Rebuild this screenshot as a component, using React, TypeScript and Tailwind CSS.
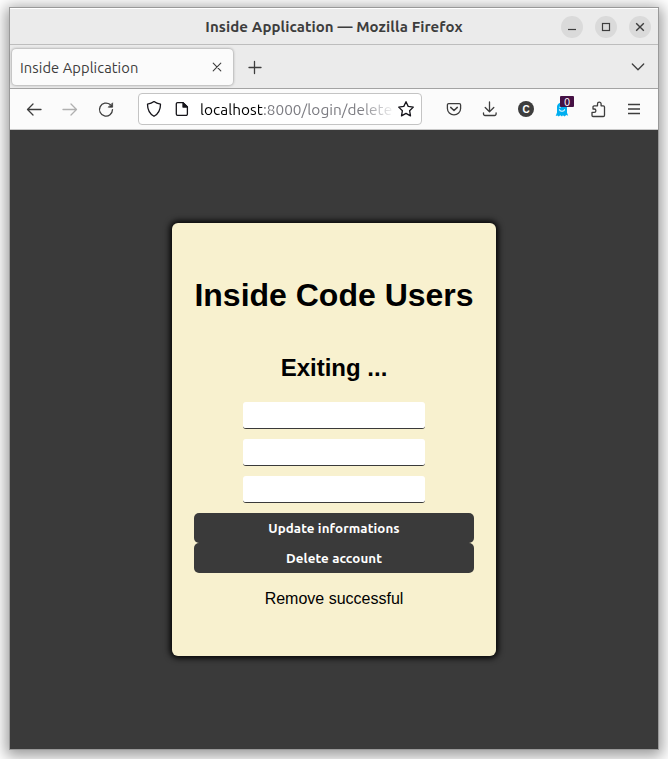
import React from "react";

const ui = "font-['Ubuntu','Noto_Sans',sans-serif]";

function Icon({ className = "", children }: { className?: string; children: React.ReactNode }) {
  return (
    <svg
      width="18"
      height="18"
      viewBox="0 0 18 18"
      fill="none"
      stroke="currentColor"
      strokeWidth="1.3"
      strokeLinecap="round"
      strokeLinejoin="round"
      className={`shrink-0 ${className}`}
    >
      {children}
    </svg>
  );
}

function WindowButton({ children }: { children: React.ReactNode }) {
  return (
    <div className="flex size-[22px] items-center justify-center rounded-full bg-[#dadada]">
      <svg width="22" height="22" viewBox="0 0 22 22" fill="none" stroke="#3d3d3d" strokeWidth="1.2">
        {children}
      </svg>
    </div>
  );
}

function TitleBar() {
  return (
    <div className="grid h-[37px] grid-cols-[100px_1fr_100px] items-center border-t border-b border-t-white border-b-[#bdbdbd] bg-[#ebebeb]">
      <div />
      <div className={`${ui} pt-[2px] text-center text-[15px] font-bold tracking-[0.1px] whitespace-nowrap text-[#3d3d3d]`}>
        Inside Application — Mozilla Firefox
      </div>
      <div className="flex justify-end gap-3 pr-[7px]">
        <WindowButton>
          <path d="M7 13.5h8" />
        </WindowButton>
        <WindowButton>
          <rect x="7.5" y="7.5" width="7" height="7" />
        </WindowButton>
        <WindowButton>
          <path d="M7.2 7.2l7.6 7.6M14.8 7.2l-7.6 7.6" strokeWidth="1.4" />
        </WindowButton>
      </div>
    </div>
  );
}

function TabStrip() {
  return (
    <div className="flex h-11 items-center border-b border-[#a3a3a3] bg-[#ebebeb] pl-[2px] text-[#3d3d3d]">
      <div className="flex h-9 w-[221px] items-center justify-between rounded bg-[#fbfbfb] pr-[7px] pl-2 shadow-[0_0_3px_rgba(0,0,0,0.45)]">
        <span className={`${ui} pt-[3px] text-[14.7px] tracking-[0.08px]`}>Inside Application</span>
        <Icon>
          <path d="M5.2 5.2l7.6 7.6M12.8 5.2l-7.6 7.6" strokeWidth="1.1" />
        </Icon>
      </div>
      <Icon className="ml-[13px]">
        <path d="M3 9.5h12M8.500 3.500v12" />
      </Icon>
      <Icon className="mr-[11px] ml-auto">
        <path d="M3.3 6l5.7 5.7L14.7 6" />
      </Icon>
    </div>
  );
}

function AddressBar() {
  return (
    <div className="ml-[23px] flex h-8 w-[284px] items-center rounded border border-[#c4c4c4] bg-white pl-1.5 text-[#15141a]">
      <Icon>
        <path d="M9 1.6c1.8 1.5 4 2.3 6.5 2.6 0 6.2-2 9.500-6.500 12.100-4.500-2.600-6.500-5.900-6.500-12.100C5 3.900 7.200 3.100 9 1.600z" />
      </Icon>
      <Icon className="ml-[10px]">
        <path d="M4.600 2.600h5.400l4.400 4.400v7.100a1.300 1.300 0 0 1-1.300 1.300H4.600a1.300 1.300 0 0 1-1.300-1.300V3.900a1.300 1.300 0 0 1 1.300-1.300z" />
        <path d="M10 2.600V7h4.400z" fill="currentColor" />
      </Icon>
      <div
        className={`${ui} ml-[9px] w-[192px] overflow-hidden pt-[2px] text-[15.400px] tracking-[0.03px] whitespace-nowrap text-black [mask-image:linear-gradient(to_right,black_160px,transparent_196px)]`}
      >
        localhost<span className="text-[#7c7c82]">:8000/login/delete</span>
      </div>
      <Icon className="ml-[5px]">
        <path d="M9 1.700l2.200 4.700 5.100.7-3.700 3.600.9 5.200L9 13.400l-4.500 2.500.9-5.200-3.700-3.600 5.100-.7z" />
      </Icon>
    </div>
  );
}

function Ghost() {
  return (
    <div className="relative size-[18px]">
      <svg width="18" height="18" viewBox="0 0 18 18">
        <path
          d="M4 7.500C4 4 6.200 2.500 9 2.500s5 1.500 5 5v5.300l1.200 3-1.900-.8-1.800 1.500-1.600-1.200L9 16.500l-1.700-1.300-1.600 1.300-1.300-1-1.700.4L4 12.500z"
          fill="#00aef0"
        />
        <path d="M6.300 9.300c.6 2.600 4.800 2.600 5.400 0" fill="none" stroke="#fff" strokeWidth="1.100" />
        <circle cx="7" cy="7.300" r=".7" fill="#fff" />
      </svg>
      <span
        className={`${ui} absolute top-[-4px] left-[7px] flex h-[11px] w-[14px] items-center justify-center rounded-[1px] bg-[#451144] pt-px text-[11px] leading-none text-white`}
      >
        0
      </span>
    </div>
  );
}

function Toolbar() {
  return (
    <div className="flex h-[41px] items-center border-b border-[#c8c8c8] bg-[#fbfbfb] pl-[15px] text-[#3d3d3d]">
      <Icon>
        <path d="M16 9.500H2.500M8 4L2.500 9.500 8 15" />
      </Icon>
      <Icon className="ml-[18px] text-[#b0b0b0]">
        <path d="M2 9.500h13.500M10 4l5.500 5.500L10 15" />
      </Icon>
      <Icon className="ml-[18px]">
        <path d="M15.500 9.600a6.500 6.500 0 1 1-2.300-5" />
        <path d="M15.600 3.200v4h-4z" fill="currentColor" strokeWidth=".8" />
      </Icon>
      <AddressBar />
      <div className="ml-[23px] flex items-center gap-[18px]">
        <Icon>
          <path d="M3.700 3.600h10.600a1.300 1.300 0 0 1 1.300 1.300v3.600a6.600 6.300 0 0 1-13.200 0V4.900a1.300 1.300 0 0 1 1.300-1.300z" />
          <path d="M5.700 7.400L9 10.500l3.300-3.100" strokeWidth="1.500" />
        </Icon>
        <Icon>
          <path d="M8.500 2v9.500M4.200 7.500L8.500 11.700l4.300-4.200M2.500 12.800v1.200a1.500 1.500 0 0 0 1.500 1.500h9.600a1.500 1.500 0 0 0 1.500-1.500v-1.200" />
        </Icon>
        <div className="flex size-[18px] items-center justify-center">
          <span className="flex size-4 items-center justify-center rounded-full bg-[#3d3d3d] pt-px font-['Liberation_Sans',sans-serif] text-[10px] leading-none font-bold text-white">
            C
          </span>
        </div>
        <Ghost />
        <Icon>
          <path d="M4 16.500h10.300a1.200 1.200 0 0 0 1.200-1.200V7a1.200 1.200 0 0 0-1.200-1.200h-2.200V4a1.800 1.800 0 0 0-3.600 0v1.800H5.200A1.200 1.200 0 0 0 4 7v2h1.200a1.700 1.700 0 0 1 0 3.400H3v3.100a1 1 0 0 0 1 1z" />
        </Icon>
        <Icon>
          <path d="M3 4.500h12M3 9h12M3 13.500h12" strokeLinecap="butt" strokeWidth="1.350" />
        </Icon>
      </div>
    </div>
  );
}

function Field() {
  return (
    <input className="h-[27px] w-[182px] rounded-[3px] border-b border-[#3a3a3a] bg-white px-2 outline-none" />
  );
}

function ActionButton({ children }: { children: React.ReactNode }) {
  return (
    <button
      className={`${ui} h-[30px] w-full rounded-[5px] bg-[#3a3a3a] pt-px text-[13.333px] font-bold tracking-[0.1px] text-white`}
    >
      {children}
    </button>
  );
}

function LoginCard() {
  return (
    <div className="flex h-[433px] w-[324px] flex-col items-center rounded-md bg-[#f8f1cf] px-[22px] pt-[54px] font-['Liberation_Sans',Arial,sans-serif] text-black shadow-[0_0_6px_2px_#000]">
      <h1 className="text-[32px] leading-[37px] font-bold whitespace-nowrap">Inside Code Users</h1>
      <h2 className="mt-[40px] text-2xl leading-7 font-bold">Exiting ...</h2>
      <div className="mt-5 flex flex-col gap-[10px]">
        <Field />
        <Field />
        <Field />
      </div>
      <div className="mt-[10px] w-full">
        <ActionButton>Update informations</ActionButton>
        <ActionButton>Delete account</ActionButton>
      </div>
      <p className="mt-[17px] text-base leading-[18px]">Remove successful</p>
    </div>
  );
}

export default function App() {
  return (
    <div className="h-[759px] w-[668px] overflow-hidden bg-white pt-[7px] pl-[9px]">
      <div className="flex h-[743px] w-[650px] flex-col border border-[#999] shadow-[0_3px_14px_3px_rgba(0,0,0,0.4)]">
        <TitleBar />
        <TabStrip />
        <Toolbar />
        <main className="flex flex-1 justify-center bg-[#3a3a3a] pt-[93px]">
          <LoginCard />
        </main>
      </div>
    </div>
  );
}
